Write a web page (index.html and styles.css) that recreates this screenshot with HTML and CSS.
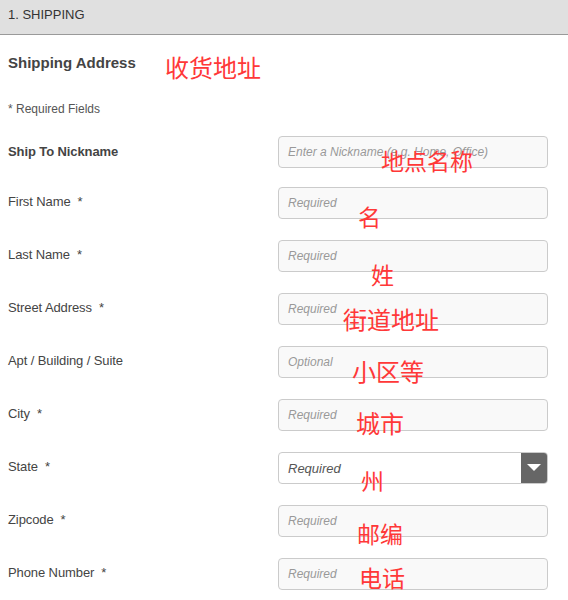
FILE: index.html
```html
<!DOCTYPE html>
<html lang="en">
<head>
<meta charset="utf-8">
<title>Shipping</title>
<link rel="stylesheet" href="styles.css">
</head>
<body>
<div class="page">
  <div class="step-header">1. SHIPPING</div>
  <div class="form-body">
    <h2 class="section-title">Shipping Address</h2>
    <p class="req-note">* Required Fields</p>
    <div class="rows">
      <div class="row first">
        <label class="lbl bold">Ship To Nickname</label>
        <div class="field"><span class="ph">Enter a Nickname (e.g. Home, Office)</span></div>
      </div>
      <div class="row">
        <label class="lbl">First Name&nbsp; *</label>
        <div class="field"><span class="ph">Required</span></div>
      </div>
      <div class="row">
        <label class="lbl">Last Name&nbsp; *</label>
        <div class="field"><span class="ph">Required</span></div>
      </div>
      <div class="row">
        <label class="lbl">Street Address&nbsp; *</label>
        <div class="field"><span class="ph">Required</span></div>
      </div>
      <div class="row">
        <label class="lbl">Apt / Building / Suite</label>
        <div class="field"><span class="ph">Optional</span></div>
      </div>
      <div class="row">
        <label class="lbl">City&nbsp; *</label>
        <div class="field"><span class="ph">Required</span></div>
      </div>
      <div class="row">
        <label class="lbl">State&nbsp; *</label>
        <div class="field select"><span class="sel-text">Required</span><span class="sel-btn"><svg width="14" height="8" viewBox="0 0 14 8"><path d="M0 0 H14 L7 7 Z" fill="#fff"/></svg></span></div>
      </div>
      <div class="row">
        <label class="lbl">Zipcode&nbsp; *</label>
        <div class="field"><span class="ph">Required</span></div>
      </div>
      <div class="row">
        <label class="lbl">Phone Number&nbsp; *</label>
        <div class="field"><span class="ph">Required</span></div>
      </div>
    </div>
  </div>
  <span class="note n1">收货地址</span>
  <span class="note n2">地点名称</span>
  <span class="note n3">名</span>
  <span class="note n4">姓</span>
  <span class="note n5">街道地址</span>
  <span class="note n6">小区等</span>
  <span class="note n7">城市</span>
  <span class="note n8">州</span>
  <span class="note n9">邮编</span>
  <span class="note n10">电话</span>
</div>
</body>
</html>
```

FILE: styles.css
```css
html, body {
  margin: 0;
  padding: 0;
  background: #fff;
}
.page {
  position: relative;
  width: 568px;
  height: 600px;
  overflow: hidden;
  font-family: "Liberation Sans", Arial, sans-serif;
  color: #444;
}
.step-header {
  height: 34px;
  line-height: 29px;
  padding: 0 8px;
  background: #e0e0e0;
  border-bottom: 1px solid #9a9a9a;
  font-size: 13px;
  color: #333;
}
.form-body {
  padding: 0 8px;
}
.section-title {
  margin: 19px 0 0;
  font-size: 15px;
  line-height: 18px;
  font-weight: bold;
  color: #444;
}
.req-note {
  margin: 29px 0 0;
  font-size: 12px;
  line-height: 16px;
  color: #555;
}
.rows {
  margin-top: 19px;
  display: flex;
  flex-direction: column;
  gap: 21px;
}
.row {
  display: grid;
  grid-template-columns: 270px 270px;
  align-items: center;
  height: 32px;
}
.row.first {
  margin-bottom: -2px;
}
.lbl {
  font-size: 13px;
  line-height: 16px;
  color: #444;
  padding-bottom: 2px;
  letter-spacing: -0.1px;
}
.lbl.bold {
  font-weight: bold;
  padding-bottom: 0;
}
.field {
  box-sizing: border-box;
  height: 32px;
  border: 1px solid #cbcbcb;
  border-radius: 4px;
  background: #f9f9f9;
  display: flex;
  align-items: center;
  padding: 0 9px;
}
.ph {
  font-size: 12px;
  font-style: italic;
  color: #999;
  white-space: nowrap;
}
.field.select {
  background: #fff;
  padding-right: 0;
  justify-content: space-between;
  overflow: hidden;
}
.sel-text {
  font-size: 13px;
  font-style: italic;
  color: #555;
}
.sel-btn {
  width: 26px;
  height: 100%;
  background: #666;
  display: flex;
  align-items: center;
  justify-content: center;
}
.note {
  position: absolute;
  font-family: "Noto Sans CJK SC", sans-serif;
  font-size: 23px;
  line-height: 1;
  color: #ff3838;
  white-space: nowrap;
}
.n1 { left: 165px; top: 55px; font-size: 24px; }
.n2 { left: 381px; top: 149px; }
.n3 { left: 358px; top: 205px; }
.n4 { left: 371px; top: 263px; }
.n5 { left: 343px; top: 307px; font-size: 24px; }
.n6 { left: 352px; top: 359px; font-size: 24px; }
.n7 { left: 356px; top: 411px; font-size: 24px; }
.n8 { left: 361px; top: 469px; }
.n9 { left: 357px; top: 522px; }
.n10 { left: 359px; top: 566px; }
```
